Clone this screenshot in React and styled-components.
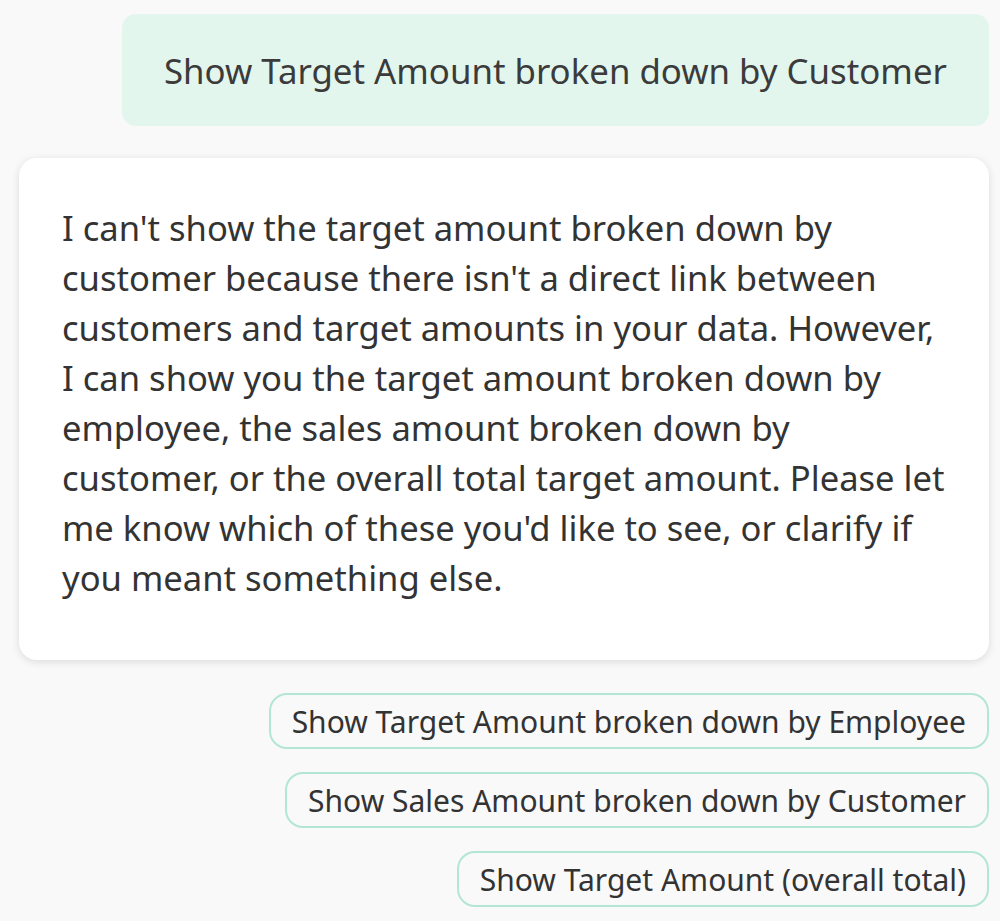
import React from "react";
import styled, { createGlobalStyle } from "styled-components";

const GlobalStyle = createGlobalStyle`
  html, body {
    margin: 0;
    padding: 0;
    background: #f9f9f9;
  }
  body {
    font-family: "Noto Sans", "Open Sans", sans-serif;
    color: #333333;
  }
`;

const Chat = styled.div`
  display: flex;
  flex-direction: column;
  align-items: flex-end;
  padding: 14px 11px 14px 19px;
  width: 1000px;
  box-sizing: border-box;
`;

const UserBubble = styled.div`
  box-sizing: border-box;
  width: 867px;
  height: 112px;
  display: flex;
  align-items: center;
  padding: 0 42px;
  background: #e3f6ee;
  border-radius: 14px;
  font-size: 34.8px;
  color: #3b3b3b;
  white-space: nowrap;
`;

const ReplyCard = styled.div`
  box-sizing: border-box;
  align-self: stretch;
  height: 502px;
  margin-top: 32px;
  padding: 45px 40px 0 43px;
  background: #ffffff;
  border-radius: 18px;
  box-shadow: 0 2px 8px rgba(0, 0, 0, 0.12);
  font-size: 34.6px;
  line-height: 50px;
  color: #333333;
`;

const Line = styled.span`
  display: block;
  white-space: nowrap;
`;

const Suggestions = styled.div`
  display: flex;
  flex-direction: column;
  align-items: flex-end;
  gap: 23px;
  margin-top: 33px;
`;

const Chip = styled.button`
  box-sizing: border-box;
  height: 56px;
  padding: 0 21px;
  background: transparent;
  border: 2px solid #b3e6d3;
  border-radius: 18px;
  font-family: "Noto Sans", "Open Sans", sans-serif;
  font-size: 30px;
  color: #333333;
  white-space: nowrap;
  cursor: pointer;
`;

const lines = [
  "I can't show the target amount broken down by",
  "customer because there isn't a direct link between",
  "customers and target amounts in your data. However,",
  "I can show you the target amount broken down by",
  "employee, the sales amount broken down by",
  "customer, or the overall total target amount. Please let",
  "me know which of these you'd like to see, or clarify if",
  "you meant something else.",
];

const suggestions = [
  "Show Target Amount broken down by Employee",
  "Show Sales Amount broken down by Customer",
  "Show Target Amount (overall total)",
];

export default function App() {
  return (
    <>
      <GlobalStyle />
      <Chat>
        <UserBubble>Show Target Amount broken down by Customer</UserBubble>
        <ReplyCard>
          {lines.map((l) => (
            <Line key={l}>{l}</Line>
          ))}
        </ReplyCard>
        <Suggestions>
          {suggestions.map((s) => (
            <Chip key={s}>{s}</Chip>
          ))}
        </Suggestions>
      </Chat>
    </>
  );
}
